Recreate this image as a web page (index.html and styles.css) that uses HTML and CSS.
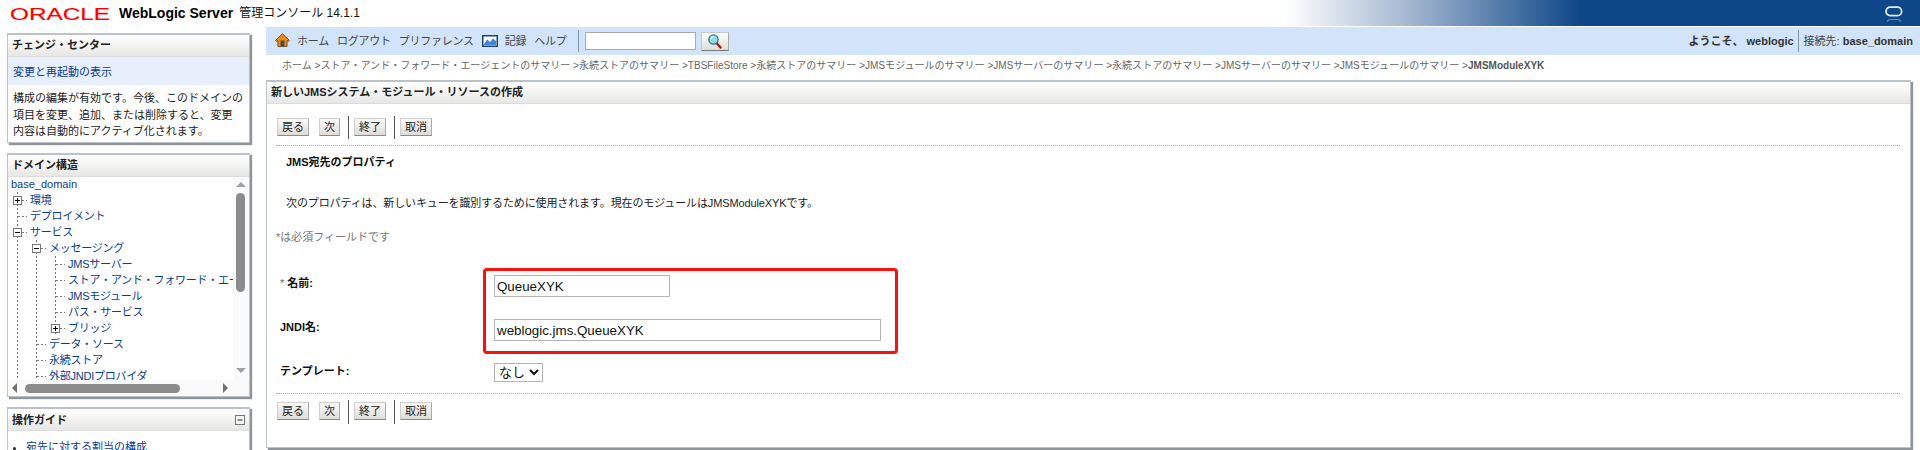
FILE: index.html
```html
<!DOCTYPE html>
<html lang="ja">
<head>
<meta charset="utf-8">
<title>WebLogic Server 管理コンソール</title>
<link rel="stylesheet" href="styles.css">
</head>
<body>
<header class="topbar">
  <svg class="oracle" width="102" height="16" viewBox="0 0 102 16"><text x="1" y="13.5" textLength="100" lengthAdjust="spacingAndGlyphs">ORACLE</text></svg>
  <span class="product">WebLogic Server</span>
  <span class="console">管理コンソール 14.1.1</span>
  <svg class="ring" width="20" height="18" viewBox="0 0 20 18"><rect x="2" y="1.2" width="15.6" height="8.4" rx="4.2" fill="none" stroke="#e4eef8" stroke-width="1.7"/><path d="M3 15.5q1-2 4-2h6q3 0 4 2" fill="none" stroke="#6d8fb6" stroke-width="1.2"/></svg>
</header>
<div class="layout">
  <aside class="sidebar">
    <section class="panel">
      <h2 class="panel-head">チェンジ・センター</h2>
      <div class="change-link"><a>変更と再起動の表示</a></div>
      <p class="change-text">構成の編集が有効です。今後、このドメインの<br>項目を変更、追加、または削除すると、変更<br>内容は自動的にアクティブ化されます。</p>
    </section>
    <section class="panel">
      <h2 class="panel-head">ドメイン構造</h2>
      <div class="tree-box">
        <div class="tree-view">
          <div class="tree">
            <div class="row root"><a>base_domain</a></div>
            <div class="row"><span class="cell t"><svg class="box" width="9" height="9" viewBox="0 0 9 9"><rect x=".5" y=".5" width="8" height="8" fill="#fff" stroke="#777"/><path d="M2 4.5h5M4.5 2v5" stroke="#000"/></svg></span><a>環境</a></div>
            <div class="row"><span class="cell t"></span><a>デプロイメント</a></div>
            <div class="row"><span class="cell t"><svg class="box" width="9" height="9" viewBox="0 0 9 9"><rect x=".5" y=".5" width="8" height="8" fill="#fff" stroke="#777"/><path d="M2 4.5h5" stroke="#000"/></svg></span><a>サービス</a></div>
            <div class="row"><span class="cell v"></span><span class="cell t"><svg class="box" width="9" height="9" viewBox="0 0 9 9"><rect x=".5" y=".5" width="8" height="8" fill="#fff" stroke="#777"/><path d="M2 4.5h5" stroke="#000"/></svg></span><a>メッセージング</a></div>
            <div class="row"><span class="cell v"></span><span class="cell v"></span><span class="cell t"></span><a>JMSサーバー</a></div>
            <div class="row"><span class="cell v"></span><span class="cell v"></span><span class="cell t"></span><a>ストア・アンド・フォワード・エージェント</a></div>
            <div class="row"><span class="cell v"></span><span class="cell v"></span><span class="cell t"></span><a>JMSモジュール</a></div>
            <div class="row"><span class="cell v"></span><span class="cell v"></span><span class="cell t"></span><a>パス・サービス</a></div>
            <div class="row"><span class="cell v"></span><span class="cell v"></span><span class="cell t"><svg class="box" width="9" height="9" viewBox="0 0 9 9"><rect x=".5" y=".5" width="8" height="8" fill="#fff" stroke="#777"/><path d="M2 4.5h5M4.5 2v5" stroke="#000"/></svg></span><a>ブリッジ</a></div>
            <div class="row"><span class="cell v"></span><span class="cell t"></span><a>データ・ソース</a></div>
            <div class="row"><span class="cell v"></span><span class="cell t"></span><a>永続ストア</a></div>
            <div class="row"><span class="cell v"></span><span class="cell t"></span><a>外部JNDIプロバイダ</a></div>
            <div class="row"><span class="cell v"></span><span class="cell v"></span></div>
          </div>
          <div class="vscroll">
            <span class="arrow up"></span>
            <span class="vthumb"></span>
            <span class="arrow down"></span>
          </div>
        </div>
        <div class="hscroll">
          <span class="arrow left"></span>
          <span class="hthumb"></span>
          <span class="arrow right"></span>
        </div>
      </div>
    </section>
    <section class="panel">
      <h2 class="panel-head split">操作ガイド<svg width="10" height="10" viewBox="0 0 10 10"><rect x=".5" y=".5" width="9" height="9" fill="#f4f4f4" stroke="#777"/><path d="M2.5 5h5" stroke="#333"/></svg></h2>
      <ul class="guide"><li><a>宛先に対する割当の構成</a></li></ul>
    </section>
  </aside>
  <main class="main">
    <nav class="nav">
      <svg class="home" width="15" height="14" viewBox="0 0 15 14"><path d="M7.5.6.6 7.4l1.1 1.1 1.2-1.1V13.5h9.2V7.4l1.2 1.1 1.1-1.1z" fill="#f08a1c" stroke="#6b4a24" stroke-width=".9"/><rect x="5.5" y="7.5" width="4" height="6" fill="#4a4a4a"/></svg>
      <a class="nav-home">ホーム</a>
      <a>ログアウト</a>
      <a>プリファレンス</a>
      <svg class="graph" width="16" height="12" viewBox="0 0 16 12"><rect x=".75" y=".75" width="14.5" height="10.5" fill="#fff" stroke="#1c3f78" stroke-width="1.5"/><path d="M2 9 5.2 4.500 8 7l3-3.500L14 6v4H2z" fill="#3f86d8"/></svg>
      <a class="nav-log">記録</a>
      <a>ヘルプ</a>
      <span class="nav-sep"></span>
      <input class="search" type="text" aria-label="検索">
      <button class="search-btn" type="button" aria-label="検索"><svg width="16" height="16" viewBox="0 0 16 16"><path d="m9.500 10 4 4.500" stroke="#9c1f1f" stroke-width="2.400" stroke-linecap="round"/><circle cx="6.500" cy="6.500" r="4.600" fill="#8fdde0" stroke="#3d6f8c" stroke-width="1.300"/><path d="M4 6q.5-2 2.500-2.500" fill="none" stroke="#fff" stroke-width="1.200"/></svg></button>
      <span class="welcome">ようこそ、 weblogic</span>
      <span class="nav-sep tight"></span>
      <span class="conn">接続先: <b>base_domain</b></span>
    </nav>
    <div class="crumbs">ホーム &gt;ストア・アンド・フォワード・エージェントのサマリー &gt;永続ストアのサマリー &gt;TBSFileStore &gt;永続ストアのサマリー &gt;JMSモジュールのサマリー &gt;JMSサーバーのサマリー &gt;永続ストアのサマリー &gt;JMSサーバーのサマリー &gt;JMSモジュールのサマリー &gt;<b>JMSModuleXYK</b></div>
    <section class="panel content-panel">
      <h1 class="panel-head">新しいJMSシステム・モジュール・リソースの作成</h1>
      <div class="content">
        <div class="toolbar">
          <button class="btn" type="button">戻る</button>
          <button class="btn next" type="button">次</button>
          <span class="tool-sep"></span>
          <button class="btn" type="button">終了</button>
          <span class="tool-sep"></span>
          <button class="btn" type="button">取消</button>
        </div>
        <h3 class="subhead">JMS宛先のプロパティ</h3>
        <p class="intro">次のプロパティは、新しいキューを識別するために使用されます。現在のモジュールはJMSModuleXYKです。</p>
        <p class="required">*は必須フィールドです</p>
        <form class="form">
          <label class="label"><i>*</i> 名前:</label>
          <input class="field short" type="text" value="QueueXYK">
          <label class="label">JNDI名:</label>
          <input class="field long" type="text" value="weblogic.jms.QueueXYK">
          <label class="label">テンプレート:</label>
          <select class="picker"><option>なし</option></select>
        </form>
        <div class="toolbar bottom">
          <button class="btn" type="button">戻る</button>
          <button class="btn next" type="button">次</button>
          <span class="tool-sep"></span>
          <button class="btn" type="button">終了</button>
          <span class="tool-sep"></span>
          <button class="btn" type="button">取消</button>
        </div>
      </div>
      <div class="annotation"></div>
    </section>
  </main>
</div>
</body>
</html>
```
FILE: styles.css
```css
* { box-sizing: border-box; }
html, body { margin: 0; height: 450px; overflow: hidden; background: #fff; }
body { font: 11px/16px "Liberation Sans", "Noto Sans CJK JP", sans-serif; color: #222; }
h1, h2, h3, p, ul { margin: 0; padding: 0; font-size: 11px; }
a { color: #0b3a92; }

.topbar {
  height: 27px;
  display: flex;
  align-items: center;
  padding: 0 16px 0 9px;
  border-bottom: 1px solid #fff;
  background: linear-gradient(90deg, #fff 1285px, #a6bad2 1405px, #0e4788 1580px) padding-box;
}
.oracle { display: block; flex: none; margin-top: 1px; }
.oracle text { font: 16.500px "Liberation Sans", sans-serif; fill: #f00; stroke: #f00; stroke-width: .2; }
.product { margin-left: 8px; font-size: 14px; font-weight: 700; color: #000; }
.console { margin-left: 6px; font-size: 12px; color: #111; }
.ring { margin-left: auto; margin-top: 3px; }

.layout { display: flex; height: 423px; }
.sidebar { flex: none; width: 266px; padding: 6px 16px 0 7px; display: flex; flex-direction: column; gap: 10px; }
.panel { background: #fff; border: 1px solid #bcc3c8; border-top-width: 2px; box-shadow: 2px 2px 1px #8f9599; flex: none; }
.panel-head {
  height: 22px;
  padding: 1px 4px 0;
  font-weight: 700;
  color: #222;
  line-height: 18px;
  background: linear-gradient(#fff, #e7e8e6);
  border-bottom: 1px solid #dcdddc;
}
.split { display: flex; justify-content: space-between; align-items: center; padding-right: 4px; }

.change-link { height: 28px; padding: 7px 5px; background: #e6effb; }
.change-text { padding: 5px 5px 3px; line-height: 16.500px; color: #222; height: 57px; }

.tree-view { display: flex; height: 203px; }
.tree { flex: 1; min-width: 0; overflow: hidden; margin-top: -1px; }
.row { display: flex; height: 16px; white-space: nowrap; line-height: 16px; }
.root { padding-left: 3px; }
.row a { padding-left: 3px; letter-spacing: -.25px; }
.root a { padding-left: 0; letter-spacing: 0; }
.cell { flex: none; width: 19px; height: 16px; display: flex; align-items: center; justify-content: center; }
.v { background: repeating-linear-gradient(#777 0 2px, transparent 2px 4px) 9px 0 / 1px 100% no-repeat; }
.t {
  background:
    repeating-linear-gradient(90deg, #777 0 2px, transparent 2px 4px) 10px 8px / 9px 1px no-repeat,
    repeating-linear-gradient(#777 0 2px, transparent 2px 4px) 9px 0 / 1px 100% no-repeat;
}
.box { display: block; }

.vscroll { flex: none; width: 15px; display: flex; flex-direction: column; align-items: center; background: #fafafa; padding: 5px 0 7px; margin-right: 1px; }
.vthumb { width: 9px; height: 99px; margin: 6px 0 auto; background: #8c8c8c; border-radius: 5px; }
.hscroll { height: 16px; display: flex; align-items: center; background: #fafafa; padding: 0 21px 0 4px; }
.hthumb { width: 155px; height: 9px; margin: 0 auto 0 8px; background: #8c8c8c; border-radius: 5px; }
.arrow { width: 0; height: 0; border: 5px solid transparent; flex: none; }
.up { border-top: 0; border-bottom-color: #a0a0a0; }
.down { border-bottom: 0; border-top-color: #a0a0a0; }
.left { border-left: 0; border-right-color: #707070; }
.right { border-right: 0; border-left-color: #707070; }

.guide { padding: 8px 0 0 18px; list-style: disc; }

.main { flex: 1; min-width: 0; display: flex; flex-direction: column; }
.nav { height: 28px; flex: none; display: flex; align-items: center; background: #d2e4f9; padding: 0 7px 0 9px; color: #444; white-space: nowrap; }
.nav a { color: #444; margin-right: 8px; letter-spacing: -.25px; }
.home { margin-right: 7px; margin-top: -3px; flex: none; }
.graph { margin-right: 7px; flex: none; }
.nav-sep { width: 1px; height: 22px; background: #8194a8; margin: 0 6px 0 4px; flex: none; }
.search { width: 111px; height: 18px; border: 1px solid #aaa; background: #fff; padding: 0; }
.search-btn { width: 28px; height: 19px; margin-left: 5px; padding: 0; display: flex; align-items: center; justify-content: center; background: linear-gradient(#fff, #dcdcd8); border: 1px solid #c9c9c9; border-bottom-color: #777; border-right-color: #aaa; }
.welcome { margin-left: auto; font-weight: 700; color: #333; }
.tight { margin: 0 5px 0 4px; }
.conn b { color: #333; }
.crumbs { height: 25px; flex: none; padding: 3px 0 0 16px; font-size: 10px; line-height: 16px; color: #666; white-space: nowrap; letter-spacing: .02px; }
.crumbs b { color: #555; }

.content-panel { position: relative; margin-right: 9px; height: 368px; }
.content { padding: 12px 10px 0 9px; }
.toolbar { display: flex; align-items: center; height: 30px; padding: 0 0 7px 1px; border-bottom: 1px dotted #aaa; }
.btn { height: 18px; padding: 0 4px; font: 11px/16px "Liberation Sans", "Noto Sans CJK JP", sans-serif; color: #222; background: linear-gradient(#fafafa, #dedcd6); border: 1px solid #cfcfcf; border-bottom-color: #8a8a8a; border-right-color: #aaa; }
.next { margin-left: 10px; }
.tool-sep { width: 1px; height: 23px; background: #555; margin: 0 5px 0 8px; }
.subhead { margin: 8px 0 0 10px; font-weight: 700; color: #111; }
.intro { margin: 25px 0 0 10px; color: #222; letter-spacing: -.12px; }
.required { margin-top: 18px; color: #777; }
.form { margin-top: 30px; padding-left: 4px; display: grid; grid-template-columns: 214px 1fr; row-gap: 22px; align-items: start; }
.label { font-weight: 700; color: #111; }
.label i { font-style: normal; font-weight: 400; color: #666; }
.field { height: 22px; padding: 0 2px; border: 1px solid #b4b4b4; font: 13.330px "Liberation Sans", sans-serif; color: #111; }
.short { width: 176px; }
.long { width: 387px; }
.picker { width: 49px; height: 19px; padding: 0; font: 13px "Liberation Sans", "Noto Sans CJK JP", sans-serif; color: #111; background: #fff; border: 1px solid #b4b4b4; }
.bottom { height: auto; padding: 6px 0 0 1px; margin-top: 11px; border-bottom: 0; border-top: 1px dotted #aaa; }
.bottom .btn { margin-bottom: 2px; }
.bottom .tool-sep { height: 24px; }
.annotation { position: absolute; left: 216px; top: 186px; width: 415px; height: 86px; border: 3px solid #f6130c; border-radius: 4px; }
```
